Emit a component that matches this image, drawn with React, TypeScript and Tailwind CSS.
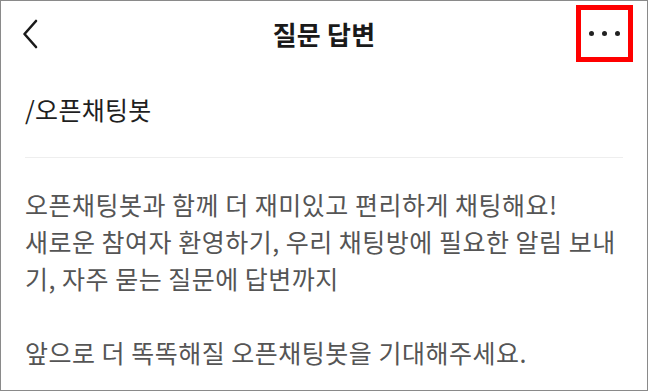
function BackIcon() {
  return (
    <svg width="20" height="30" viewBox="0 0 20 30" fill="none">
      <path d="M16 2 L4.5 15 L16 28" stroke="#1a1a1a" strokeWidth="2.6" strokeLinecap="round" strokeLinejoin="round" />
    </svg>
  );
}

function MoreButton() {
  return (
    <div className="flex h-[57px] w-[57px] items-center justify-center gap-[8px] border-[5px] border-[#ff0000]">
      <span className="h-[5px] w-[5px] rounded-full bg-[#222]" />
      <span className="h-[5px] w-[5px] rounded-full bg-[#222]" />
      <span className="h-[5px] w-[5px] rounded-full bg-[#222]" />
    </div>
  );
}

const bodyLines = [
  '오픈채팅봇과 함께 더 재미있고 편리하게 채팅해요!',
  '새로운 참여자 환영하기, 우리 채팅방에 필요한 알림 보내',
  '기, 자주 묻는 질문에 답변까지',
  '',
  '앞으로 더 똑똑해질 오픈채팅봇을 기대해주세요.',
];

export default function App() {
  return (
    <div className="h-[391px] w-[648px] border border-[#8a8a8a] bg-white font-['Noto_Sans_CJK_KR',sans-serif]">
      <header className="grid h-[65px] grid-cols-[1fr_auto_1fr] items-center">
        <div className="pl-[19px]">
          <BackIcon />
        </div>
        <h1 className="text-[26px] font-bold leading-none tracking-[0.2px] text-[#1a1a1a]">질문 답변</h1>
        <div className="flex justify-end pr-[14px]">
          <MoreButton />
        </div>
      </header>

      <div className="px-[24px] pt-[27px]">
        <p className="text-[25px] leading-[33px] tracking-[0.3px] text-[#1f1f1f]">/오픈채팅봇</p>
        <div className="mt-[31px] border-t border-[#eeeeee]" />
        <div className="mt-[28px] text-[25px] leading-[37px] tracking-[0.5px] text-[#555555]">
          {bodyLines.map((line, i) => (
            <p key={i} className="h-[37px] whitespace-nowrap">
              {line}
            </p>
          ))}
        </div>
      </div>
    </div>
  );
}
